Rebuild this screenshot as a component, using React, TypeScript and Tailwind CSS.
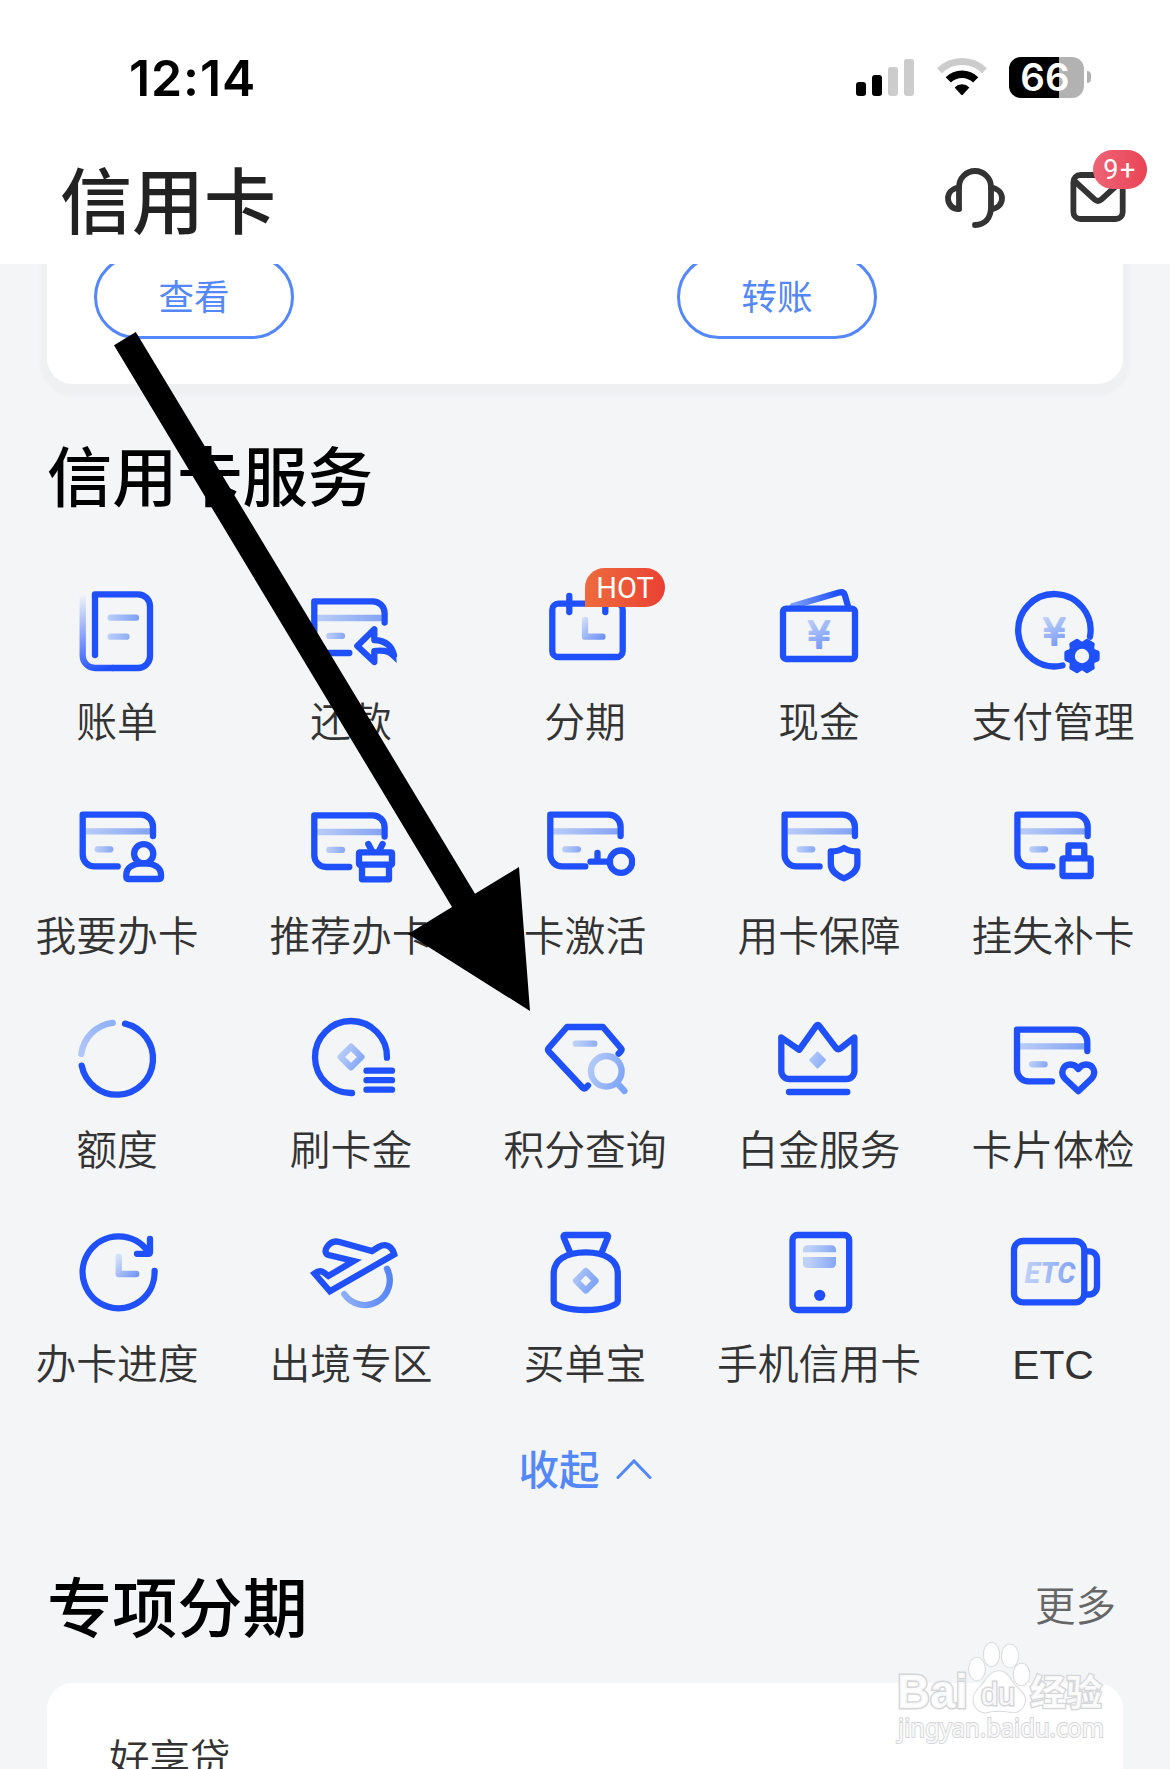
import React from 'react';

interface Service {
  label: string;
  icon: React.ReactNode;
  hot?: boolean;
}

interface GradientDef {
  id: string;
  from: [number, number];
  to: [number, number];
  colors: [string, string];
}

const LIGHT = '#bdd0f7';
const MID = '#7c9ff5';
const BLUE = '#1f50fb';

// All coordinates are in the 100x100 space of a single icon
const GRADIENTS: GradientDef[] = [
  { id: 'g-lines', from: [40, 0], to: [72, 0], colors: [LIGHT, MID] },
  { id: 'g-stripe', from: [0, 0], to: [68, 0], colors: ['#bccef7', '#84a4f3'] },
  { id: 'g-dash', from: [12, 0], to: [31, 0], colors: [LIGHT, '#86a6f5'] },
  { id: 'g-spine', from: [42, 88], to: [16, 14], colors: [BLUE, '#f3f5f7'] },
  { id: 'g-mark', from: [42, 36], to: [60, 70], colors: ['#c3d4f9', '#6d92f5'] },
  { id: 'g-hand', from: [50, 36], to: [70, 58], colors: ['#d3dffa', '#6a8ff5'] },
  { id: 'g-flap', from: [22, 28], to: [68, 12], colors: ['#86a5f8', BLUE] },
  { id: 'g-ring', from: [14, 50], to: [46, 14], colors: ['#b3c8f8', '#8fb0f6'] },
  { id: 'g-diamond', from: [38, 46], to: [62, 58], colors: ['#b9cdf8', '#7ea4f8'] },
  { id: 'g-zoom', from: [56, 60], to: [90, 72], colors: ['#b0c7f8', '#7ba4f8'] },
  { id: 'g-orbit', from: [42, 66], to: [90, 60], colors: ['#8eaef8', '#5585f9'] },
  { id: 'g-etc', from: [20, 50], to: [74, 50], colors: ['#c3d4f9', '#7fa1f5'] },
];

const GradientDefs: React.FC = () => (
  <svg className="absolute w-0 h-0" aria-hidden="true">
    <defs>
      {GRADIENTS.map(({ id, from, to, colors }) => (
        <linearGradient
          key={id}
          id={id}
          gradientUnits="userSpaceOnUse"
          x1={from[0]}
          y1={from[1]}
          x2={to[0]}
          y2={to[1]}
        >
          <stop offset="0" stopColor={colors[0]} />
          <stop offset="1" stopColor={colors[1]} />
        </linearGradient>
      ))}
    </defs>
  </svg>
);

const Icon: React.FC<{ children: React.ReactNode }> = ({ children }) => (
  <svg
    viewBox="0 0 100 100"
    className="w-[100px] h-[100px]"
    fill="none"
    stroke={BLUE}
    strokeWidth={6.3}
    strokeLinecap="round"
    strokeLinejoin="round"
  >
    {children}
  </svg>
);

const CardIcon: React.FC<{ x: number; y: number; children: React.ReactNode }> = ({ x, y, children }) => (
  <Icon>
    <g transform={`translate(${x} ${y})`}>
      <path d="M3 16.7H67.5" stroke="url(#g-stripe)" strokeLinecap="butt" />
      <path d="M15 34.6H27.6" stroke="url(#g-dash)" />
      <path d="M70.3 21.3V12A12 12 0 0 0 58.3 0H0V40A11.7 11.7 0 0 0 11.7 51.7H35" />
    </g>
    {children}
  </Icon>
);

const Yen: React.FC<{ x: number; y: number }> = ({ x, y }) => (
  <text
    x={x}
    y={y}
    textAnchor="middle"
    fontSize="37"
    className="font-['DejaVu_Sans',sans-serif]"
    fill="url(#g-mark)"
    stroke="url(#g-mark)"
    strokeWidth={2.2}
  >
    ¥
  </text>
);

const gearPoints = Array.from({ length: 6 }, (_, i) => {
  const at = (deg: number, r: number) => {
    const a = ((i * 60 + deg) * Math.PI) / 180;
    return `${(79 + r * Math.cos(a)).toFixed(2)},${(76 + r * Math.sin(a)).toFixed(2)}`;
  };
  return [at(-12, 16), at(12, 16), at(24, 12.6), at(36, 12.6)].join(' ');
}).join(' ');

const services: Service[] = [
  {
    label: '账单',
    icon: (
      <Icon>
        <path d="M46 88H28A12.3 12.3 0 0 1 15.7 75.7V16" stroke="url(#g-spine)" />
        <path d="M28 75V14.3H71A12 12 0 0 1 83 26.3V76A12 12 0 0 1 71 88H46" />
        <path d="M43.7 37.7H69M43.7 56.7H59.5" stroke="url(#g-lines)" />
      </Icon>
    ),
  },
  {
    label: '还款',
    icon: (
      <CardIcon x={13.3} y={21.3}>
        <path d="M56.3 66L73.3 49.3V60C84 60.5 91 66 93 75.5C88 70.5 81 70 73.3 71V82Z" />
        <path d="M90 67Q95.5 74 95.8 83L86 74Z" fill={BLUE} stroke="none" />
      </CardIcon>
    ),
  },
  {
    label: '分期',
    hot: true,
    icon: (
      <Icon>
        <rect x="17.3" y="23.7" width="70.4" height="53.3" rx="6" />
        <path d="M34.3 16V32M70.3 16V32" />
        <path d="M50 40V56.7H67.5" stroke="url(#g-hand)" />
      </Icon>
    ),
  },
  {
    label: '现金',
    icon: (
      <Icon>
        <path d="M24 26L70 12.6Q74.5 11.2 75.8 15L79.5 28" stroke="url(#g-flap)" />
        <rect x="14" y="28.7" width="72" height="50.3" rx="3" />
        <Yen x={50} y={67.5} />
      </Icon>
    ),
  },
  {
    label: '支付管理',
    icon: (
      <Icon>
        <path d="M87 56.7A36.2 36.2 0 1 0 59.5 85.5" />
        <Yen x={51.3} y={64.5} />
        <polygon points={gearPoints} fill={BLUE} strokeWidth={4} />
        <circle cx="79" cy="76" r="7.2" fill="#f3f5f7" stroke="none" />
      </Icon>
    ),
  },
  {
    label: '我要办卡',
    icon: (
      <CardIcon x={15.7} y={20.7}>
        <circle cx="76.7" cy="59.7" r="9.6" />
        <path d="M61.3 85Q59.3 85 59.3 83V81C59.3 73.5 66 69.3 76.7 69.3C87.5 69.3 94 73.5 94 81V83Q94 85 92 85Z" />
      </CardIcon>
    ),
  },
  {
    label: '推荐办卡',
    icon: (
      <CardIcon x={13.3} y={21.3}>
        <path d="M67.3 50L71 57M81.6 50L78 57" />
        <rect x="58" y="58.3" width="33" height="12.4" rx="1" />
        <path d="M61 71V85.3H88V71" />
      </CardIcon>
    ),
  },
  {
    label: '卡激活',
    icon: (
      <CardIcon x={15.3} y={20.7}>
        <circle cx="86" cy="67.7" r="11.2" />
        <path d="M55.5 67.7H75M62.5 59V67.7" />
      </CardIcon>
    ),
  },
  {
    label: '用卡保障',
    icon: (
      <CardIcon x={15.6} y={20.7}>
        <path d="M75 54C71 56.7 66.5 57.5 61.8 57.5V70C61.8 77 68 81.5 75 84.3C82 81.5 88.4 77 88.4 70V57.5C83.5 57.5 79 56.7 75 54Z" />
      </CardIcon>
    ),
  },
  {
    label: '挂失补卡',
    icon: (
      <CardIcon x={14.4} y={20.7}>
        <path d="M65.5 64V51.5H81.3V64" />
        <rect x="59.5" y="64.3" width="28.2" height="17.7" rx="1" />
      </CardIcon>
    ),
  },
  {
    label: '额度',
    icon: (
      <Icon>
        <path d="M58 15.6A36 36 0 1 1 14.7 57.7" />
        <path d="M14.3 46A36 36 0 0 1 45.7 14.8" stroke="url(#g-ring)" />
      </Icon>
    ),
  },
  {
    label: '刷卡金',
    icon: (
      <Icon>
        <path d="M86 49.7A36 36 0 1 0 51 85" />
        <path d="M50 38.7L60.4 49L50 59.3L39.6 49Z" stroke="url(#g-diamond)" />
        <path d="M65.5 62.7H91M65.5 72.2H91M65.5 81.7H91" />
      </Icon>
    ),
  },
  {
    label: '积分查询',
    icon: (
      <Icon>
        <path d="M83.6 45.7L85.8 43.3Q87.2 41.8 86 40.3L68 19H32L13.7 40Q12.3 41.8 13.8 43.5L47.5 79.5Q49.3 81.3 51 79.7L53 77.5" />
        <path d="M40.8 35.7H59.3" stroke="url(#g-lines)" />
        <path d="M82.5 75.5L89.5 83" stroke="url(#g-zoom)" />
        <circle cx="71.3" cy="63.3" r="15.3" stroke="url(#g-zoom)" />
      </Icon>
    ),
  },
  {
    label: '白金服务',
    icon: (
      <Icon>
        <path d="M12.3 29.5L30.2 41.8L47.3 17.8Q48.8 15.8 50.3 17.8L67 39.8Q69.2 42.3 71.7 40.3L85.4 29.5V63A8 8 0 0 1 77.4 71H20.3A8 8 0 0 1 12.3 63Z" />
        <path d="M20 84H78.3" />
        <path d="M48.6 44.5L56 52L48.6 59.5L41.2 52Z" fill="url(#g-diamond)" stroke="url(#g-diamond)" strokeWidth={2} />
      </Icon>
    ),
  },
  {
    label: '卡片体检',
    icon: (
      <CardIcon x={14} y={21.7}>
        <path d="M75.3 83.2L62.3 71C56.5 65 60 56.5 67.5 56.5C71 56.5 73.6 58.2 75.3 61C77 58.2 79.6 56.5 83 56.5C90.6 56.5 94 65 88.2 71Z" />
      </CardIcon>
    ),
  },
  {
    label: '办卡进度',
    icon: (
      <Icon>
        <path d="M87.6 49A36 36 0 1 1 81 29.5" />
        <path d="M83 17V30Q83 31.8 81.2 31.8H70" />
        <path d="M51.7 35V52H69.3" stroke="url(#g-hand)" />
      </Icon>
    ),
  },
  {
    label: '出境专区',
    icon: (
      <Icon>
        <path d="M86 46.7A24.9 24.9 0 0 1 43.2 72" stroke="url(#g-orbit)" />
        <path
          d="M28.9 69.3L13.5 51.5C17 48.8 20.5 48.8 23 50.5L27.4 54L52.7 39L27.5 33C24 32 23.8 28 26 25C29 20.5 33 18.5 38.5 20L71 29L78 24.8C82 22.5 86.5 22.5 89.5 25.5C91.5 27.5 92.8 29.5 93.3 32.3Z"
          strokeLinejoin="miter"
        />
      </Icon>
    ),
  },
  {
    label: '买单宝',
    icon: (
      <Icon>
        <path d="M34.8 29.7L28.7 15.5Q27.8 13 30.5 13H71Q73.9 13 72.8 15.5L67 29.7" />
        <path d="M18.7 52C18.7 38 31 30.3 50.7 30.3C70 30.3 82.8 38 82.8 52V79C82.8 83.5 68 88 50.7 88C33 88 18.7 83.5 18.7 79Z" />
        <path d="M50.8 49L60.5 58.7L50.8 68.4L41.1 58.7Z" stroke="url(#g-diamond)" />
      </Icon>
    ),
  },
  {
    label: '手机信用卡',
    icon: (
      <Icon>
        <rect x="23.5" y="13" width="56.7" height="75" rx="5" />
        <path d="M34 30.3V28Q34 23.3 38.7 23.3H62.3Q67 23.3 67 28V30.3Z" fill="url(#g-lines)" stroke="none" />
        <path d="M34 35V41Q34 46 38.7 46H62.3Q67 46 67 41V35Z" fill="url(#g-lines)" stroke="none" />
        <circle cx="50.7" cy="73.3" r="5.6" fill={BLUE} stroke="none" />
      </Icon>
    ),
  },
  {
    label: 'ETC',
    icon: (
      <Icon>
        <rect x="11" y="19" width="70.3" height="61.4" rx="9" />
        <path d="M83 29.3H86A8 8 0 0 1 94 37.3V64.5A8 8 0 0 1 86 72.5H83" />
        <text
          x="21.5"
          y="60.8"
          fontSize="30"
          textLength="51"
          className="font-['Roboto','Liberation_Sans',sans-serif] font-extrabold italic"
          fill="url(#g-etc)"
          stroke="none"
          lengthAdjust="spacingAndGlyphs"
        >
          ETC
        </text>
      </Icon>
    ),
  },
];

const StatusBar: React.FC = () => (
  <div className="flex items-center justify-between h-[156px] pl-[129px] pr-[79px]">
    <span className="font-['Inter',sans-serif] font-semibold text-[50px] leading-none tracking-[0.9px] text-black">
      12:14
    </span>
    <div className="flex items-end gap-[22px] pb-[2px]">
      <div className="flex items-end gap-1.5 mb-[2px] mr-px">
        <i className="w-[10px] h-[14px] rounded-[3px] bg-black" />
        <i className="w-[10px] h-[21px] rounded-[3px] bg-black" />
        <i className="w-[10px] h-[29px] rounded-[3px] bg-[#ccc]" />
        <i className="w-[10px] h-[37px] rounded-[3px] bg-[#ccc]" />
      </div>
      <svg viewBox="0 0 50 38" className="w-[50px] h-[38px] mb-[2px]" fill="none">
        <path d="M2.5 12.8A32 32 0 0 1 47.5 12.8" stroke="#ccc" strokeWidth="7" />
        <path d="M11.3 21.8A19.5 19.5 0 0 1 38.7 21.8" stroke="#000" strokeWidth="7.5" />
        <path d="M17.6 29.4A10.5 10.5 0 0 1 32.4 29.4L26 36.4Q25 37.5 24 36.4Z" fill="#000" />
      </svg>
      <div className="flex items-center gap-[3px]">
        <div className="flex items-center justify-center w-[75px] h-[41px] rounded-[12px] bg-linear-to-r from-black from-[67%] to-[#b2b2b2] to-[67%]">
          <span className="-ml-[3px] font-['Inter',sans-serif] font-semibold text-[38.5px] leading-none text-white">66</span>
        </div>
        <i className="w-1 h-3 rounded-r-full bg-[#b2b2b2]" />
      </div>
    </div>
  </div>
);

const Header: React.FC = () => (
  <header className="shrink-0 h-[264px] bg-white">
    <StatusBar />
    <div className="flex justify-between h-[108px] pl-[60px] pr-[40px]">
      <h1 className="-mt-[3px] text-[72px] leading-[88px] font-medium text-[#222]">信用卡</h1>
      <div className="flex gap-[56px] pt-1">
        <svg
          viewBox="0 0 70 70"
          className="w-[70px] h-[70px]"
          fill="none"
          stroke="#333"
          strokeWidth="5.8"
          strokeLinecap="round"
          strokeLinejoin="round"
        >
          <path d="M19 48.8V27A16 16 0 0 1 51 27V47C51 58 45 64.5 35 65" />
          <path d="M19 27.5C12 28.5 8 33 8 38.3C8 44.5 12.5 49.3 19 49" />
          <path d="M51 27.5C58 28.5 62 33 62 38.3C62 44 58 48.3 51 49.3" />
        </svg>
        <div className="relative">
          <svg
            viewBox="0 0 64 70"
            className="w-[64px] h-[70px]"
            fill="none"
            stroke="#333"
            strokeWidth="5.8"
            strokeLinecap="round"
            strokeLinejoin="round"
          >
            <rect x="7.4" y="15" width="49.3" height="44" rx="7" />
            <path d="M9 21.5L28.5 39.3Q32 42.5 35.5 39.3L55 21.5" />
          </svg>
          <span className="absolute left-[27px] -top-[10px] flex items-center justify-center w-[54px] h-[39px] pt-[2px] rounded-full bg-linear-to-r from-[#ee6377] to-[#e94455] font-['Roboto','Liberation_Sans',sans-serif] text-[27px] leading-none tracking-[1.5px] text-white">
            9+
          </span>
        </div>
      </div>
    </div>
  </header>
);

const PillButton: React.FC<{ children: React.ReactNode }> = ({ children }) => (
  <button className="w-[200px] h-[84px] pb-[4px] rounded-full border-[3px] border-[#5487fa] text-[35.5px] leading-none text-[#5487fa]">
    {children}
  </button>
);

const ServiceItem: React.FC<{ service: Service }> = ({ service }) => (
  <div className="relative flex flex-col items-center h-[214px]">
    {service.icon}
    <span className="mt-[19px] font-['Liberation_Sans','Noto_Sans_CJK_SC',sans-serif] text-[40.8px] leading-[48px] font-[350] whitespace-nowrap text-[#333]">
      {service.label}
    </span>
    {service.hot && (
      <span className="absolute left-[117px] -top-[12px] flex items-center justify-center w-[80px] h-[39px] pt-[2px] rounded-[20px] rounded-bl-none bg-linear-to-r from-[#ed6b3d] to-[#ea3f33] font-['Roboto','Liberation_Sans',sans-serif] text-[29px] leading-none text-white">
        HOT
      </span>
    )}
  </div>
);

const Watermark: React.FC = () => (
  <svg
    viewBox="-6 0 228 108"
    className="absolute left-[887px] top-[1640px] w-[228px] h-[108px]"
    fill="#fff"
    fillOpacity="0.85"
    stroke="#d5d6d8"
    strokeWidth="1.6"
    paintOrder="stroke"
  >
    <ellipse cx="84" cy="29" rx="8" ry="11.5" />
    <ellipse cx="98.5" cy="14.5" rx="7.8" ry="11.8" />
    <ellipse cx="117" cy="16" rx="8.3" ry="11.5" />
    <ellipse cx="128.5" cy="34.5" rx="8" ry="11" />
    <path d="M106 31C113 31 116 37 121 44C127 51 133 54 132 61C131 69 125 73 119 72.5C112 70.5 100 70.5 93 72.5C86 73 80 67 80.5 58C81 51 87 48 92 41C96 35 100 31 106 31Z" />
    <text
      x="4"
      y="68"
      fontSize="48"
      strokeWidth="3"
      textLength="71"
      lengthAdjust="spacingAndGlyphs"
      className="font-['Liberation_Sans',sans-serif] font-bold"
    >
      Bai
    </text>
    <text
      x="88"
      y="65"
      fontSize="31"
      strokeWidth="3"
      textLength="34"
      lengthAdjust="spacingAndGlyphs"
      className="font-['Liberation_Sans',sans-serif]"
    >
      du
    </text>
    <text x="137" y="66" fontSize="36" strokeWidth="2.6" className="font-['Noto_Sans_CJK_SC',sans-serif] font-bold">
      经验
    </text>
    <text
      x="5"
      y="97"
      fontSize="26"
      strokeWidth="2"
      textLength="206"
      lengthAdjust="spacingAndGlyphs"
      className="font-['Noto_Sans',sans-serif]"
    >
      jingyan.baidu.com
    </text>
  </svg>
);

export default function App() {
  return (
    <div className="relative flex flex-col w-[1170px] h-[1769px] overflow-hidden bg-[#f3f5f7] font-['Noto_Sans_CJK_SC',sans-serif]">
      <GradientDefs />
      <Header />

      <main className="flex flex-col flex-1 min-h-0 overflow-hidden">
        <section className="shrink-0 flex h-[120px] mx-[47px] pl-[47px] rounded-b-[26px] bg-white shadow-[0_5px_3px_7px_#eff0f2]">
          <div className="w-[583px] -mt-[9px]">
            <PillButton>查看</PillButton>
          </div>
          <div className="-mt-[9px]">
            <PillButton>转账</PillButton>
          </div>
        </section>

        <h2 className="shrink-0 mt-[49px] pl-[47px] text-[65.2px] leading-[80px] font-medium text-black">信用卡服务</h2>

        <section className="shrink-0 grid grid-cols-5 mt-[67px]">
          {services.map((service) => (
            <ServiceItem key={service.label} service={service} />
          ))}
        </section>

        <button className="shrink-0 flex items-center justify-center gap-4 h-[60px] mt-[3px] text-[40.5px] leading-[60px] font-medium text-[#5487fa]">
          <span className="-mt-[3px]">收起</span>
          <svg viewBox="0 0 36 22" className="w-[36px] h-[22px]" fill="none" stroke="#5487fa" strokeWidth="3" strokeLinecap="round">
            <path d="M2 19.5L18 3L34 19.5" />
          </svg>
        </button>

        <div className="shrink-0 flex items-center justify-between h-[80px] mt-[65px] pl-[47px] pr-[54px]">
          <h2 className="text-[65.2px] leading-[80px] font-medium text-black">专项分期</h2>
          <span className="text-[40.5px] leading-[60px] font-[350] text-[#666]">更多</span>
        </div>

        <section className="shrink-0 h-[140px] mt-[39px] mx-[47px] pl-[62px] pt-[44px] rounded-t-[26px] bg-white">
          <p className="text-[40.5px] leading-[60px] font-[350] text-[#333]">好享贷</p>
        </section>
      </main>

      <Watermark />

      {/* pointer towards 积分查询 */}
      <svg viewBox="0 0 1170 1769" className="absolute inset-0 w-full h-full pointer-events-none">
        <polygon points="135.8,332 114,345.3 452,907 408,934 530,1011 519,867 475,893.7" fill="#000" />
      </svg>
    </div>
  );
}
